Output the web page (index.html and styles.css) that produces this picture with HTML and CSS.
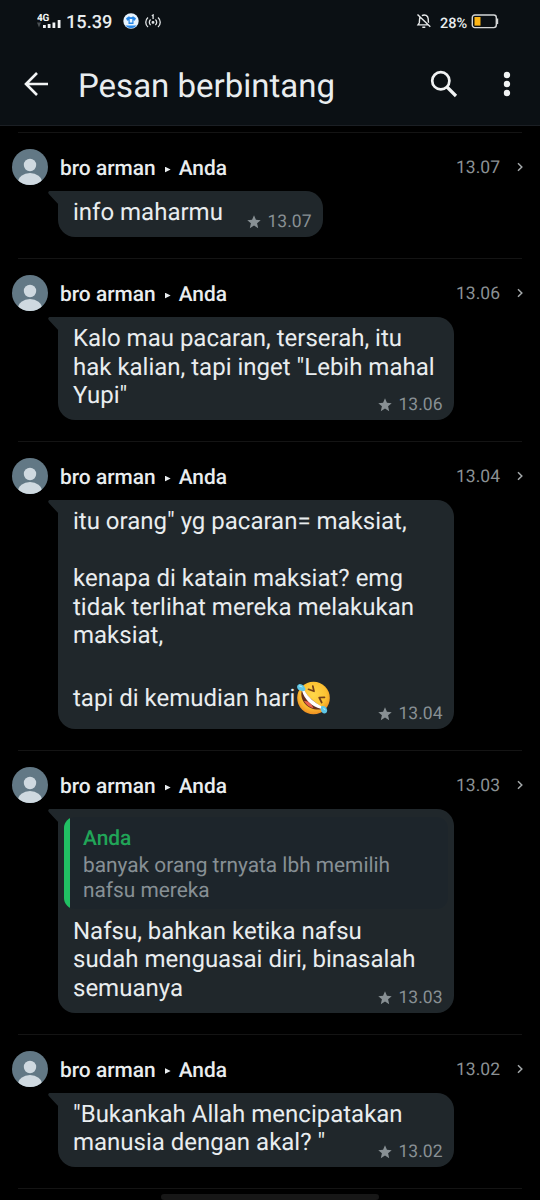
FILE: index.html
```html
<!DOCTYPE html>
<html lang="id">
<head>
<meta charset="utf-8">
<title>Pesan berbintang</title>
<link rel="stylesheet" href="styles.css">
</head>
<body>
<svg class="defs" aria-hidden="true">
  <symbol id="avatar" viewBox="0 0 36 36">
    <clipPath id="disc"><circle cx="18" cy="18" r="18"/></clipPath>
    <g clip-path="url(#disc)">
      <rect width="36" height="36" fill="#627885"/>
      <circle cx="18" cy="16" r="6.2" fill="#cfd9e0"/>
      <ellipse cx="18" cy="33.5" rx="12" ry="9.5" fill="#cfd9e0"/>
    </g>
  </symbol>
  <symbol id="star" viewBox="0 0 24 24">
    <path fill="currentColor" d="M12 17.900l7.200 4.600-1.900-8.200 6.200-5.400-8.200-.7L12 .5 8.700 8.200.5 8.900l6.200 5.400-1.900 8.200z"/>
  </symbol>
  <symbol id="tail" viewBox="0 0 12 16">
    <path fill="currentColor" d="M2.200 0H12v16h-1.200V13.800L1 3.200C-.5 1.500.3 0 2.200 0z"/>
  </symbol>
  <symbol id="chevron" viewBox="0 0 8 10">
    <path fill="none" stroke="currentColor" stroke-width="1.500" d="M2 1.300 5.800 5 2 8.700"/>
  </symbol>
</svg>
<div class="screen">
  <header class="top">
    <div class="status">
      <div class="status-left">
        <svg class="signal" viewBox="0 0 25 18">
          <text class="net" x="0" y="8.500">4G</text>
          <path fill="#4b5054" d="M0 10.500h4l-2 5z"/>
          <path fill="#f2f4f5" d="M6 13h2.800v3H6zM10.700 12h2.800v4h-2.800zM15.500 10.500h2.800V16h-2.800zM20.700 8h2.800v8h-2.800z"/>
        </svg>
        <span class="clock">15.39</span>
        <svg class="app-dot" viewBox="0 0 16 16">
          <circle cx="8" cy="8" r="7.700" fill="#e8f4ff"/>
          <path fill="#2586e8" d="M3 5.200 6 3.300c1 1.300 3 1.300 4 0l3 1.900-1.200 2.500-1.300-.5V11h-5V7.200l-1.300.5zM2.300 12.500h11.400A7.500 7.500 0 0 1 2.300 12.500z"/>
          <path fill="#e8f4ff" d="M6.700 6h2.600v3.500H6.700z"/>
        </svg>
        <svg class="hotspot" viewBox="0 0 16 16" fill="none" stroke="#e1e4e6" stroke-width="1.300">
          <path d="M3 3.500C0 6 0 10.500 3 13M5.600 5.500c-1.700 1.600-1.700 4 0 5.600M13 3.500c3 2.500 3 7 0 9.500M10.400 5.500c1.700 1.600 1.700 4 0 5.600M6.800 1.800 8.100 1V5"/>
          <circle cx="8" cy="8.400" r=".8" fill="#e1e4e6"/>
        </svg>
      </div>
      <div class="status-right">
        <svg class="bell" viewBox="0 0 16 16" fill="none" stroke="#e8eaeb" stroke-width="1.400">
          <path d="M1.500 1.500 14.300 13.800M3.900 4.500C3.300 6.500 3.600 9 3.200 10L2 11.900h10M5.900 2.600C9 .8 12 3 12.200 5.800c.1 1.500 0 2.800.4 4M6.300 14.300h3"/>
        </svg>
        <span class="percent">28%</span>
        <svg class="battery" viewBox="0 0 28 15">
          <rect x="1.300" y="1" width="24" height="12.600" rx="2.500" fill="none" stroke="#d4d6d7" stroke-width="1.400"/>
          <rect x="3.500" y="3" width="6" height="8.600" fill="#fdb515"/>
          <path d="M26.500 4.500v5.600" stroke="#d4d6d7" stroke-width="1.400"/>
        </svg>
      </div>
    </div>
    <div class="toolbar">
      <svg class="back" viewBox="0 0 26 26" fill="none" stroke="#f1f3f4" stroke-width="2.600"><path d="M25 13H3M14 2 3 13l11 11"/></svg>
      <h1 class="title">Pesan berbintang</h1>
      <svg class="search" viewBox="0 0 28 28" fill="none" stroke="#f1f3f4"><circle cx="10.800" cy="10.800" r="8.600" stroke-width="2.700"/><path stroke-width="3.200" d="m17 17 9 9"/></svg>
      <svg class="more" viewBox="0 0 8 26" fill="#f1f3f4"><circle cx="4" cy="4" r="3.200"/><circle cx="4" cy="13" r="3.200"/><circle cx="4" cy="22" r="3.200"/></svg>
    </div>
  </header>

  <main class="list">
    <article class="item">
      <div class="head"><svg class="avatar"><use href="#avatar"/></svg><span class="names">bro arman<i class="arrow"></i>Anda</span><time class="time">13.07</time><svg class="chevron"><use href="#chevron"/></svg></div>
      <div class="bubble short"><svg class="tail"><use href="#tail"/></svg>
        <p class="text">info maharmu</p>
        <div class="meta"><svg class="star"><use href="#star"/></svg>13.07</div>
      </div>
    </article>
    <article class="item">
      <div class="head"><svg class="avatar"><use href="#avatar"/></svg><span class="names">bro arman<i class="arrow"></i>Anda</span><time class="time">13.06</time><svg class="chevron"><use href="#chevron"/></svg></div>
      <div class="bubble"><svg class="tail"><use href="#tail"/></svg>
        <p class="text">Kalo mau pacaran, terserah, itu<br>hak kalian, tapi inget "Lebih mahal<br>Yupi"</p>
        <div class="meta"><svg class="star"><use href="#star"/></svg>13.06</div>
      </div>
    </article>
    <article class="item">
      <div class="head"><svg class="avatar"><use href="#avatar"/></svg><span class="names">bro arman<i class="arrow"></i>Anda</span><time class="time">13.04</time><svg class="chevron"><use href="#chevron"/></svg></div>
      <div class="bubble"><svg class="tail"><use href="#tail"/></svg>
        <p class="text">itu orang" yg pacaran= maksiat,<br><br>kenapa di katain maksiat? emg<br>tidak terlihat mereka melakukan<br>maksiat,<br><br></p>
        <p class="text emoji-line">tapi di kemudian hari<svg class="emoji" viewBox="0 0 34 34" role="img" aria-label="rofl">
            <defs><radialGradient id="face" cx=".5" cy=".4" r=".6"><stop offset="0" stop-color="#ffd84a"/><stop offset=".65" stop-color="#fcc132"/><stop offset="1" stop-color="#ee8f22"/></radialGradient></defs>
            <circle cx="17.500" cy="17" r="16.300" fill="url(#face)"/>
            <path fill="#65301d" d="M5.500 11C4 20 12 29.500 24 28.500c1.500-.2 2.200-1.500 1.300-2.700C20 22 12 16 8.500 10c-.8-1.200-2.700-1-3 1z"/>
            <path fill="#fff" d="M6 9.500c1-.8 2.200-.5 2.800.5C12 16 19 22 25.300 25.200c1 .7.700 2.300-.5 2.500C16 26 8 18 6 9.500z"/>
            <path fill="#e9604f" d="M8 20c4-.5 8 3 9.500 7.300C13.500 26.500 10 23.500 8 20z"/>
            <path fill="none" stroke="#75401a" stroke-width="1.700" stroke-linecap="round" stroke-linejoin="round" d="M12.500 8.300 18 10.300 16.800 5M28.500 16.300l-5.300.2 2.500 5"/>
            <path fill="#5cc5e6" d="M9.500 8C9 11 5.500 10.500 3 9 .5 7.500.5 4 3 3.200c3-.7 5.500 1.800 6.500 4.800zM25.500 25c3.500-.5 5.500 1.500 5.700 4.500 0 3-3.200 4-5 2-1.600-1.600-1.700-4.500-.7-6.500z"/>
            <path fill="#a8e5f4" d="M2.500 5c1.500-1 3.500 0 4.500 1.500C5 6 3.500 6 2.500 5zM27 27c1.500.2 2.500 1 2.700 2.500C28.500 29 27.500 28.500 27 27z"/>
          </svg></p>
        <div class="meta"><svg class="star"><use href="#star"/></svg>13.04</div>
      </div>
    </article>
    <article class="item">
      <div class="head"><svg class="avatar"><use href="#avatar"/></svg><span class="names">bro arman<i class="arrow"></i>Anda</span><time class="time">13.03</time><svg class="chevron"><use href="#chevron"/></svg></div>
      <div class="bubble"><svg class="tail"><use href="#tail"/></svg>
        <blockquote class="quote">
          <div class="quote-name">Anda</div>
          <div class="quote-text">banyak orang trnyata lbh memilih<br>nafsu mereka</div>
        </blockquote>
        <p class="text">Nafsu, bahkan ketika nafsu<br>sudah menguasai diri, binasalah<br>semuanya</p>
        <div class="meta"><svg class="star"><use href="#star"/></svg>13.03</div>
      </div>
    </article>
    <article class="item">
      <div class="head"><svg class="avatar"><use href="#avatar"/></svg><span class="names">bro arman<i class="arrow"></i>Anda</span><time class="time">13.02</time><svg class="chevron"><use href="#chevron"/></svg></div>
      <div class="bubble"><svg class="tail"><use href="#tail"/></svg>
        <p class="text">"Bukankah Allah mencipatakan<br>manusia dengan akal? "</p>
        <div class="meta"><svg class="star"><use href="#star"/></svg>13.02</div>
      </div>
    </article>
    <div class="end-rule"></div>
  </main>
  <div class="nav-handle"></div>
</div>
</body>
</html>
```
FILE: styles.css
```css
* { box-sizing: border-box; }
body {
  margin: 0;
  background: #000;
  font-family: Roboto, "Noto Sans", sans-serif;
  text-rendering: geometricPrecision;
  color: #e9edef;
}
svg { display: block; flex: none; }
.defs { position: absolute; width: 0; height: 0; }
.screen { position: relative; width: 540px; height: 1200px; overflow: hidden; background: #000; }

.top { height: 126px; background: #0b1014; border-bottom: 1px solid #1b1f24; }
.status { height: 43px; display: flex; justify-content: space-between; padding: 0 41px 0 37px; }
.status-left, .status-right { display: flex; align-items: center; }
.signal { width: 25px; height: 18px; margin-top: -1px; }
.net { font: 700 10px Roboto, sans-serif; fill: #f2f4f5; letter-spacing: -0.3px; }
.clock { margin-left: 4px; width: 46px; font-size: 18.200px; font-weight: 500; line-height: 43px; padding-top: 1px; white-space: nowrap; }
.app-dot { width: 16px; height: 16px; margin-left: 11px; margin-top: -1px; }
.hotspot { width: 16px; height: 16px; margin-left: 6px; }
.bell { width: 16px; height: 16px; margin-top: -1px; }
.percent { margin-left: 8px; width: 27px; font-size: 14.500px; font-weight: 500; line-height: 46px; padding-top: 4px; white-space: nowrap; }
.battery { width: 28px; height: 15px; margin-left: 4px; }

.toolbar { height: 82px; display: flex; align-items: center; padding: 0 29px 0 23px; }
.back { width: 26px; height: 26px; }
.title { margin: 5px 0 0 29px; flex: 1; font-size: 33px; font-weight: 400; line-height: 40px; }
.search { width: 28px; height: 28px; margin-right: 45px; }
.more { width: 8px; height: 26px; }

.list { padding-top: 6px; }
.item { display: flex; flex-direction: column; align-items: flex-start; padding-bottom: 21px; }
.item::before, .end-rule { content: ""; align-self: stretch; height: 1px; margin: 0 18px; background: #141414; }
.head { width: 100%; height: 58px; padding: 16px 16px 0 12px; display: flex; align-items: flex-start; }
.avatar { width: 36px; height: 36px; }
.names { flex: 1; margin-left: 12px; display: flex; align-items: center; font-size: 20.900px; font-weight: 500; line-height: 37px; padding-top: 2px; }
.arrow { width: 6px; height: 6px; margin: 0 8px 0 9px; background: #e9edef; clip-path: polygon(0 0, 100% 50%, 0 100%); }
.time { font-size: 17.500px; line-height: 36px; padding-top: 1px; color: #8b9194; }
.chevron { width: 8px; height: 10px; margin: 13px 0 0 16px; color: #a5a9ab; }

.bubble { position: relative; width: 396px; margin-left: 58px; padding: 7px 15px 10.500px; border-radius: 0 17px 17px 17px; background: #20272b; }
.short { width: 265px; }
.tail { position: absolute; left: -10px; top: 0; width: 12px; height: 16px; color: #20272b; }
.text { margin: 0; font-size: 24px; line-height: 28.500px; white-space: nowrap; }
.emoji-line { display: flex; align-items: center; height: 40.500px; }
.emoji { width: 34px; height: 34px; margin: -1px 0 0 1px; }
.meta { position: absolute; right: 11.500px; bottom: 4px; display: flex; align-items: center; gap: 7px; font-size: 17.500px; line-height: 22px; color: #889094; }
.star { width: 14px; height: 14px; }

.quote { margin: 1px -9px 7.500px; padding: 8px 12px 0 19px; height: 92px; border-radius: 11px; background: linear-gradient(to right, #21c063 6.500px, #1d252b 6.500px); }
.quote-name { font-size: 20.900px; font-weight: 500; line-height: 28px; color: #21a558; }
.quote-text { margin-top: 1px; font-size: 20.850px; line-height: 25px; color: #879095; white-space: nowrap; }

.nav-handle { position: absolute; left: 161px; top: 1194px; width: 218px; height: 6px; border-radius: 3px; background: #171717; }
```
